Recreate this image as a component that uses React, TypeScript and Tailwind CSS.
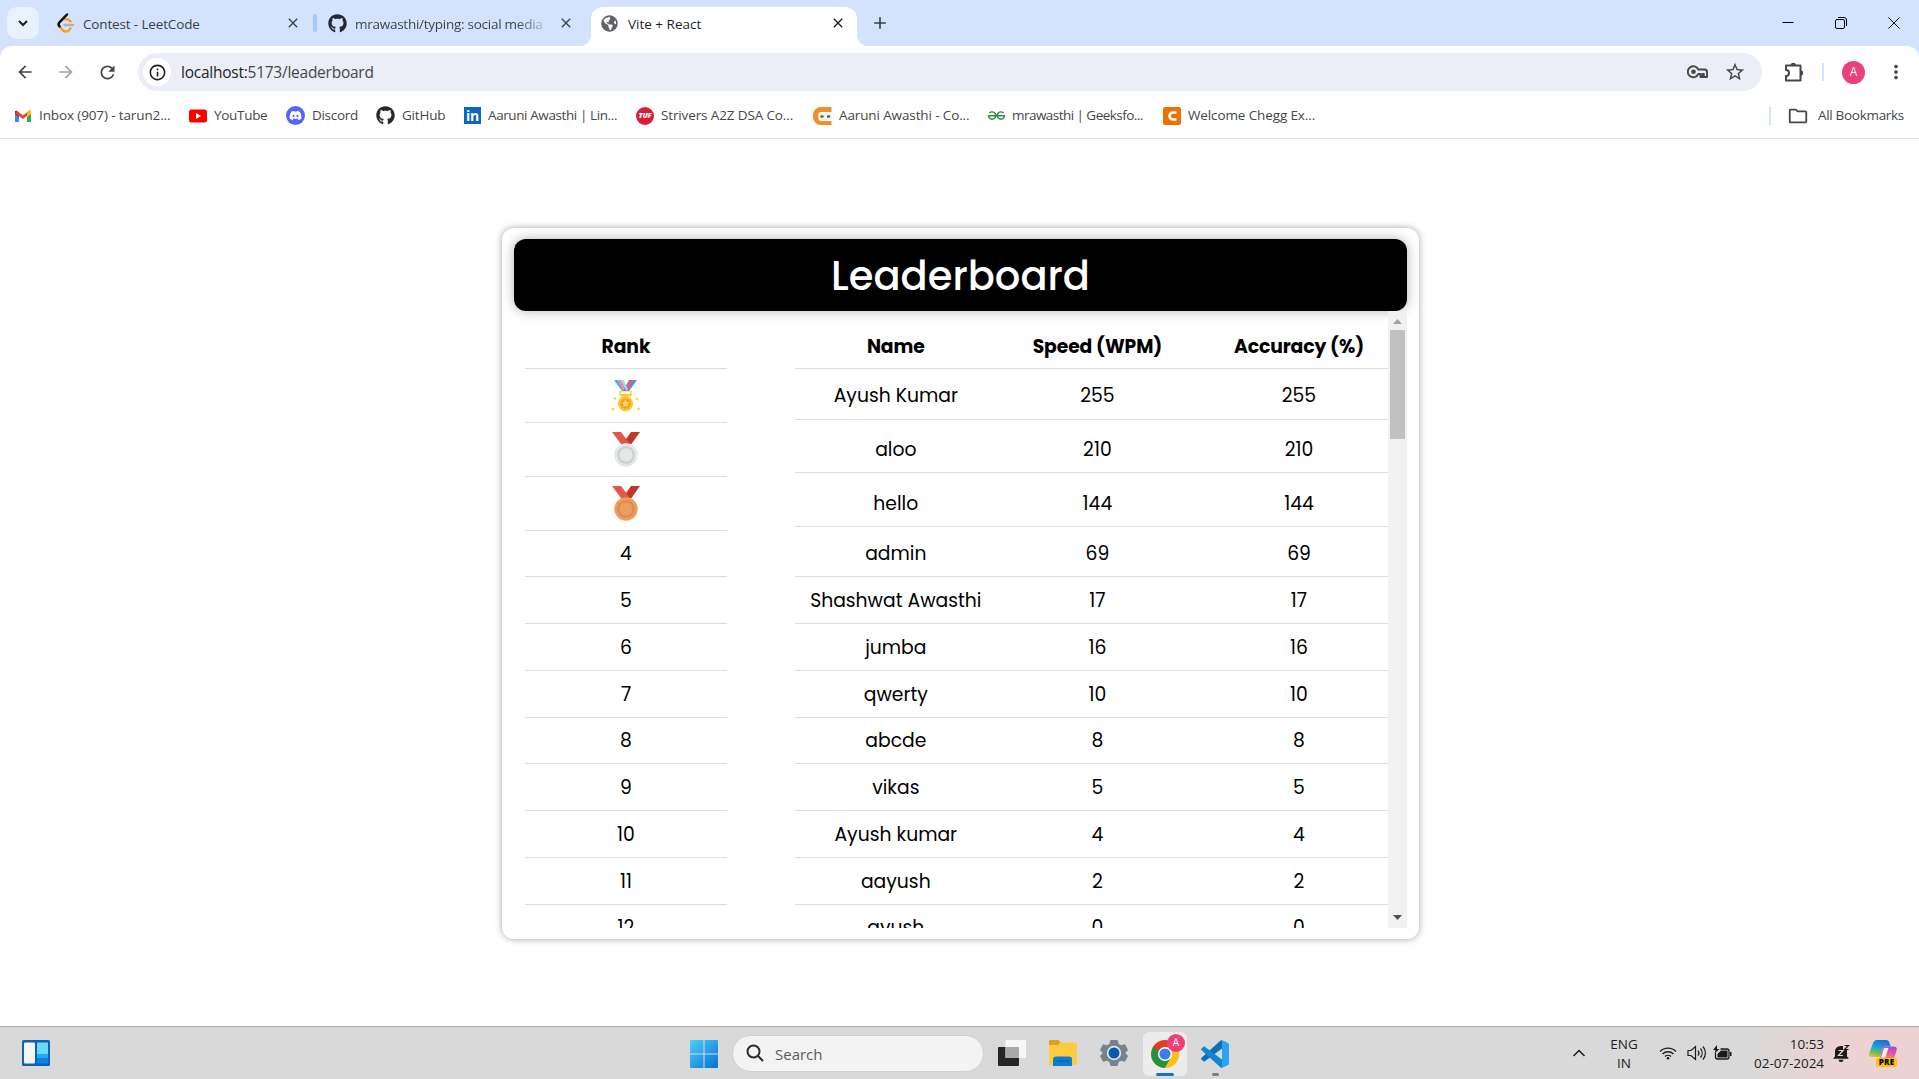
import React from "react";
import { FaGithub, FaDiscord, FaGlobeAmericas } from "react-icons/fa";
import {
  MdArrowBack,
  MdArrowForward,
  MdRefresh,
  MdInfoOutline,
  MdStarOutline,
  MdMoreVert,
  MdAdd,
  MdClose,
  MdOutlineFolder,
} from "react-icons/md";
import { SiGeeksforgeeks } from "react-icons/si";

const names: [string, number][] = [
  ["Ayush Kumar", 255],
  ["aloo", 210],
  ["hello", 144],
  ["admin", 69],
  ["Shashwat Awasthi", 17],
  ["jumba", 16],
  ["qwerty", 10],
  ["abcde", 8],
  ["vikas", 5],
  ["Ayush kumar", 4],
  ["aayush", 2],
  ["ayush", 0],
];

function GoldMedal() {
  return (
    <svg viewBox="0 0 30 34" className="h-[34px] w-[30px]">
      <path d="M3 1h8l6 11h-6z" fill="#2cb5f5" />
      <path d="M6 1h4l6 11h-4z" fill="#fa8a8c" />
      <path d="M26 1h-8l-6 11h6z" fill="#2f9af3" />
      <path d="M22.500 1h-4L13 12h4z" fill="#f0596a" />
      <path d="M9.500 1h3l4.500 9-1.500 2z" fill="#8fdcfb" />
      <path d="M8.500 12h12v5h-12z" fill="#ffc928" />
      <path d="M10 12.500h9v2.500h-9z" fill="#fff" />
      <circle cx="14.500" cy="24.500" r="7.700" fill="#ffc928" />
      <circle cx="14.500" cy="24.500" r="5.300" fill="#f79c2d" />
      <path d="m14.500 20.500 1.200 2.600 2.800.3-2.100 1.900.6 2.800-2.500-1.400-2.500 1.400.6-2.800-2.100-1.900 2.800-.3z" fill="#ffdd62" />
      <g fill="#ffc928">
        <circle cx="4" cy="19.500" r="1.200" />
        <circle cx="2" cy="30" r="1.300" />
        <circle cx="27.500" cy="30" r="1.200" />
        <path d="m26 18 .7 1.500 1.500.6-1.500.6-.7 1.500-.6-1.500-1.500-.6 1.500-.6z" />
      </g>
    </svg>
  );
}

function Medal({ outer, ring, inner }: { outer: string; ring: string; inner: string }) {
  return (
    <svg viewBox="0 0 30 36" className="-mt-[2px] h-9 w-[30px]">
      <path d="M29 1h-9l-8.500 12h9z" fill="#c0392b" />
      <path d="M1 1h9l9 12h-9z" fill="#e2574c" />
      <circle cx="15" cy="24" r="11.700" fill={outer} />
      <circle cx="15" cy="24" r="8.700" fill={ring} />
      <circle cx="15" cy="24" r="6.700" fill={inner} />
    </svg>
  );
}

function LeaderboardRow({ rank, name, score }: { rank: number; name: string; score: number }) {
  const podium = rank <= 3;
  return (
    <div className={podium ? "flex h-[53.900px] shrink-0" : "flex h-[46.750px] shrink-0"}>
      <div className="flex h-full w-[202px] shrink-0 items-center justify-center border-b border-[#dddddd] pt-[2px]">
        {rank === 1 && <GoldMedal />}
        {rank === 2 && <Medal outer="#e4e7e7" ring="#cbcdcd" inner="#e4e7e7" />}
        {rank === 3 && <Medal outer="#ed9d5d" ring="#d68d54" inner="#ed9d5d" />}
        {!podium && rank}
      </div>
      <div
        className={
          podium
            ? "ml-[68px] flex h-[50.500px] shrink-0 items-center border-b border-[#dddddd] pt-[5px]"
            : "ml-[68px] flex h-full shrink-0 items-center border-b border-[#dddddd] pt-[2px]"
        }
      >
        <span className="w-[201.600px] text-center whitespace-nowrap">{name}</span>
        <span className="w-[201.600px] text-center">{score}</span>
        <span className="w-[201.600px] text-center">{score}</span>
      </div>
    </div>
  );
}

function Leaderboard() {
  return (
    <section className="h-[711px] w-[917px] rounded-xl bg-white px-3 pt-[11px] shadow-[0_0_7px_rgba(0,0,0,0.36)]">
      <h1 className="flex h-[72px] items-center justify-center rounded-xl bg-black pt-px text-[40px] font-medium text-white shadow-[0_0_12px_rgba(0,0,0,0.3)]">
        Leaderboard
      </h1>
      <div className="flex h-[617px]">
        <div className="flex h-full w-[874px] flex-col overflow-hidden pl-[11px] text-[18.750px] text-black">
          <div className="flex h-[58px] shrink-0 font-bold tracking-[-0.100px]">
            <div className="w-[202px] shrink-0 border-b border-[#dddddd] pt-[22px] text-center leading-7">Rank</div>
            <div className="ml-[68px] flex shrink-0 border-b border-[#dddddd] pt-[22px] text-center leading-7">
              <span className="w-[201.600px]">Name</span>
              <span className="w-[201.600px]">Speed (WPM)</span>
              <span className="w-[201.600px]">Accuracy (%)</span>
            </div>
          </div>
          {names.map(([name, score], i) => (
            <LeaderboardRow key={name} rank={i + 1} name={name} score={score} />
          ))}
        </div>
        <div className="flex h-full w-[19px] flex-col items-center justify-between bg-[#f1f1f1]">
          <div className="flex flex-col items-center">
            <svg viewBox="0 0 19 19" className="h-[19px] w-[19px]">
              <path d="M5 13h9L9.500 8z" fill="#a3a3a3" />
            </svg>
            <div className="h-[109px] w-[15px] bg-[#c1c1c1]" />
          </div>
          <svg viewBox="0 0 19 19" className="h-[19px] w-[19px]">
            <path d="M5 6h9l-4.500 5z" fill="#505050" />
          </svg>
        </div>
      </div>
    </section>
  );
}

function LeetCodeIcon() {
  return (
    <svg viewBox="0 0 18 20" className="h-5 w-[18px]" fill="none" strokeWidth="2.500" strokeLinecap="round">
      <path d="m7.500 6 2.500.2c1 .2 2 .9 3.500 2.300M2.500 13.500l3.700 4c1.500 1.300 4 1.300 5.500-.2l1.800-1.900" stroke="#f7a11b" />
      <path d="M10 1.500 2.700 9.200a3 3 0 0 0-.2 4.200" stroke="#111" />
      <path d="M7.500 12h8.500" stroke="#b3b1b0" />
    </svg>
  );
}

function TabStrip() {
  return (
    <header className="flex h-[46px] bg-[#d3e3fd] text-[13.500px] text-[#3c4043]">
      <button className="mt-[7px] ml-[7px] flex h-8 w-8 items-center justify-center rounded-[10px] bg-[#e9f1fe]">
        <svg viewBox="0 0 12 12" className="h-3 w-3" fill="none" stroke="#1f1f1f" strokeWidth="2">
          <path d="m2 4 4 4 4-4" />
        </svg>
      </button>
      <div className="flex h-[46px] w-[274px] items-center pl-[18px]">
        <LeetCodeIcon />
        <span className="mt-[2px] ml-2 w-[202px] whitespace-nowrap tracking-[-0.150px]">Contest - LeetCode</span>
        <MdClose className="h-4 w-4" />
      </div>
      <div className="mt-[14px] h-[18px] w-1 rounded-sm bg-[#a8c7fa]" />
      <div className="flex h-[46px] w-[274px] items-center pl-[11px]">
        <FaGithub className="h-[19px] w-[19px] text-[#24292f]" />
        <span className="mt-[2px] ml-2 w-[190px] overflow-hidden bg-linear-to-r from-[#3c4043] from-85% to-[#3c404333] bg-clip-text tracking-[-0.260px] whitespace-nowrap text-transparent">
          mrawasthi/typing: social media
        </span>
        <MdClose className="ml-[13px] h-4 w-4" />
      </div>
      <div className="relative mt-[7px] flex h-[39px] w-[266px] items-center rounded-t-xl bg-white pb-[7px] pl-[9px] text-[#1f1f1f]">
        <span className="absolute bottom-0 -left-3 h-3 w-3 bg-[radial-gradient(circle_at_0_0,transparent_12px,white_12.500px)]" />
        <span className="absolute -right-3 bottom-0 h-3 w-3 bg-[radial-gradient(circle_at_100%_0,transparent_12px,white_12.500px)]" />
        <FaGlobeAmericas className="ml-px h-[17px] w-[17px] text-[#5f6368]" />
        <span className="mt-[2px] ml-[10px] w-[202px]">Vite + React</span>
        <MdClose className="h-4 w-4" />
      </div>
      <MdAdd className="mt-[13px] ml-[13px] h-5 w-5" />
      <div className="mr-[19px] ml-auto flex h-[45px] items-center gap-[41px] text-black">
        <svg viewBox="0 0 12 12" className="h-3 w-3" stroke="currentColor">
          <path d="M.5 5.500h11" />
        </svg>
        <svg viewBox="0 0 12 12" className="h-3 w-3" fill="none" stroke="currentColor">
          <rect x=".5" y="2.500" width="9" height="9" rx="1.500" />
          <path d="M3 .5h6a2.500 2.500 0 0 1 2.500 2.500v6" />
        </svg>
        <svg viewBox="0 0 12 12" className="h-3 w-3" stroke="currentColor">
          <path d="m.5.5 11 11M11.500.5l-11 11" />
        </svg>
      </div>
    </header>
  );
}

function KeyIcon() {
  return (
    <svg viewBox="0 0 22 16" className="h-4 w-[22px]" fill="none" stroke="currentColor" strokeWidth="1.900">
      <path d="M11.300 5.500A5.500 5.500 0 1 0 11.300 10h2.200v3h2v-3h1.300v3h3.200V8a2.500 2.500 0 0 0-2-2.500z" strokeLinejoin="round" />
      <circle cx="6.500" cy="7.800" r="2.300" fill="currentColor" stroke="none" />
    </svg>
  );
}

function ExtensionIcon() {
  return (
    <svg viewBox="0 0 20 22" className="h-[22px] w-5">
      <path
        d="M2 4.500h14.500v15H2V15a3 3 0 0 0 0-6z"
        fill="none"
        stroke="currentColor"
        strokeWidth="2"
        strokeLinejoin="round"
      />
      <path d="M6.500 4a2.800 2.800 0 0 1 5.500 0zM17 9.300a2.800 2.800 0 0 1 0 5.500z" fill="currentColor" />
    </svg>
  );
}

function Toolbar() {
  return (
    <div className="bg-[#d3e3fd]">
      <div className="flex h-[52px] items-center rounded-t-xl bg-white text-[#474747]">
        <MdArrowBack className="ml-[15px] h-5 w-5" />
        <MdArrowForward className="ml-[21px] h-5 w-5 text-[#a6a6a6]" />
        <MdRefresh className="ml-[21px] h-[21px] w-[21px]" />
        <div className="ml-5 flex h-[38px] w-[1624px] items-center rounded-full bg-[#ebeef7] pl-[5px]">
          <span className="flex h-7 w-7 items-center justify-center rounded-full bg-white text-[#1f1f1f]">
            <MdInfoOutline className="h-[19px] w-[19px]" />
          </span>
          <span className="mt-[2px] ml-[10px] text-[15.500px] tracking-[-0.250px] text-[#474747]">
            <span className="text-[#1f1f1f]">localhost:</span>5173/leaderboard
          </span>
          <span className="mr-4 ml-auto flex items-center gap-[15px]">
            <KeyIcon />
            <MdStarOutline className="h-[22px] w-[22px]" />
          </span>
        </div>
        <span className="ml-[22px]">
          <ExtensionIcon />
        </span>
        <div className="ml-[18px] h-[18px] w-[2px] bg-[#d3e3fd]" />
        <span className="ml-[18px] flex h-[23px] w-[23px] items-center justify-center rounded-full bg-[#ec407a] text-[12px] text-white">
          A
        </span>
        <MdMoreVert className="ml-[20px] h-[22px] w-[22px]" />
      </div>
    </div>
  );
}

const bookmarks: { label: string; width: string; tracking: string; icon: React.ReactNode }[] = [
  {
    label: "Inbox (907) - tarun2...",
    width: "w-[175px]",
    tracking: "tracking-[-0.120px]",
    icon: (
      <svg viewBox="0 0 18 18" className="h-[18px] w-[18px]">
        <path d="M1 4v11h4V8z" fill="#4285f4" />
        <path d="M13 8v7h4V4z" fill="#34a853" />
        <path d="M1 4v3l4 3V6L3 4z" fill="#c5221f" />
        <path d="M17 4v3l-4 3V6l2-2z" fill="#fbbc04" />
        <path d="M2 3 9 8.500 16 3v3.500l-7 5.500-7-5.500z" fill="#ea4335" />
        <path d="M13 6v4l4-3V4.500C17 3 15.500 2.500 14.500 4z" fill="#fbbc04" />
      </svg>
    ),
  },
  {
    label: "YouTube",
    width: "w-[97px]",
    tracking: "tracking-[-0.300px]",
    icon: (
      <svg viewBox="0 0 18 18" className="h-[18px] w-[18px]">
        <rect y="2.500" width="18" height="13" rx="2.500" fill="#f00" />
        <path d="M7 6v6l5-3z" fill="#fff" />
      </svg>
    ),
  },
  {
    label: "Discord",
    width: "w-[90px]",
    tracking: "tracking-[-0.300px]",
    icon: (
      <span className="flex h-[19px] w-[19px] items-center justify-center rounded-full bg-[#5865f2]">
        <FaDiscord className="h-[13px] w-[13px] text-white" />
      </span>
    ),
  },
  {
    label: "GitHub",
    width: "w-[88px]",
    tracking: "tracking-[-0.200px]",
    icon: <FaGithub className="h-[19px] w-[19px] text-[#24292f]" />,
  },
  {
    label: "Aaruni Awasthi | Lin...",
    width: "w-[172px]",
    tracking: "tracking-[-0.400px]",
    icon: (
      <span className="flex h-[17px] w-[17px] items-center justify-center bg-[#0a66c2] font-['Open_Sans'] text-[14px] leading-none font-bold tracking-tight text-white">
        in
      </span>
    ),
  },
  {
    label: "Strivers A2Z DSA Co...",
    width: "w-[177px]",
    tracking: "tracking-[-0.130px]",
    icon: (
      <span className="flex h-[18px] w-[18px] items-center justify-center rounded-full bg-[#d81e34] text-[7.500px] font-extrabold tracking-tight text-white italic">
        TUF
      </span>
    ),
  },
  {
    label: "Aaruni Awasthi - Co...",
    width: "w-[175px]",
    tracking: "tracking-[-0.120px]",
    icon: (
      <svg viewBox="0 0 19 18" className="h-[18px] w-[19px]">
        <path d="M18.500 0H8a8 8 0 0 0-8 8v2a8 8 0 0 0 8 8h10.500v-4H8.500a3 3 0 0 1-3-3V8a3 3 0 0 1 3-3h10z" fill="#f0902a" />
        <rect x="5.500" y="6" width="13.500" height="7" rx="2" fill="#f1f1f1" />
        <path d="M7.500 8.500h3v2h-3zM14 8.500h3v2h-3z" fill="#444" />
      </svg>
    ),
  },
  {
    label: "mrawasthi | Geeksfo...",
    width: "w-[175px]",
    tracking: "tracking-[-0.540px]",
    icon: <SiGeeksforgeeks className="h-[17px] w-[17px] text-[#2f8d46]" />,
  },
  {
    label: "Welcome Chegg Ex...",
    width: "w-[170px]",
    tracking: "tracking-[-0.120px]",
    icon: (
      <svg viewBox="0 0 18 18" className="h-[18px] w-[18px]">
        <rect width="18" height="18" rx="2.500" fill="#eb7100" />
        <path d="M13.500 5.500H10a3.500 3.500 0 0 0 0 7h3.500" fill="none" stroke="#fff" strokeWidth="2.600" />
      </svg>
    ),
  },
];

function BookmarksBar() {
  return (
    <div className="flex h-[41px] items-center border-b border-[#dfe1e5] bg-white pb-[5px] pl-[14px] text-[13.500px] text-[#474747]">
      {bookmarks.map((b) => (
        <div key={b.label} className={`flex shrink-0 items-center gap-[7px] whitespace-nowrap ${b.width} ${b.tracking}`}>
          {b.icon}
          <span>{b.label}</span>
        </div>
      ))}
      <div className="ml-auto h-[18px] w-[2px] bg-[#d3e3fd]" />
      <MdOutlineFolder className="ml-[16px] h-[22px] w-[22px]" />
      <span className="mr-[15px] ml-[9px] tracking-[-0.300px]">All Bookmarks</span>
    </div>
  );
}

function ChromeLogo() {
  return (
    <svg viewBox="0 0 28 28" className="h-7 w-7">
      <circle cx="14" cy="14" r="14" fill="#fbc116" />
      <path d="M1.900 7A14 14 0 0 0 14 28l6-10.500-6-3.500V7z" fill="#229342" />
      <path d="M1.900 7A14 14 0 0 1 26.100 7H14a7 7 0 0 0-6.300 4L8 17.500z" fill="#e33b2e" />
      <path d="M1.900 7 8 17.500 14 14 7 10z" fill="#229342" />
      <path d="M14 28a14 14 0 0 0 12.100-21H14l6 10.500z" fill="#fbc116" />
      <circle cx="14" cy="14" r="7" fill="#fff" />
      <circle cx="14" cy="14" r="5.600" fill="#3c7ded" />
    </svg>
  );
}

function Taskbar() {
  return (
    <footer className="flex h-[53px] items-center border-t border-[#ababab] bg-linear-to-r from-[#d9d9d9] from-91% to-[#ecd2d3] to-96% text-[#1b1b1b]">
      <svg viewBox="0 0 28 26" className="ml-[22px] h-[26px] w-7">
        <rect width="28" height="26" rx="1.500" fill="#0c62b8" />
        <rect x="2" y="2.500" width="11" height="21" rx="1" fill="#f5f5f5" />
        <path d="M15 2.500h11V14H15z" fill="#69dbff" />
        <path d="M15 14h11v4.500H15z" fill="#1fa6f8" />
        <path d="M15 18.500h11v5H15z" fill="#0683ea" />
      </svg>
      <svg viewBox="0 0 28 28" className="mt-px ml-[640px] h-7 w-7">
        <defs>
          <linearGradient id="win" x1="0" y1="0" x2="1" y2="1">
            <stop offset="0" stopColor="#4fd0fb" />
            <stop offset="1" stopColor="#0571cf" />
          </linearGradient>
        </defs>
        <path
          d="M1 0h12.500v13.500H0V1a1 1 0 0 1 1-1zM14.500 0H27a1 1 0 0 1 1 1v12.500H14.500zM0 14.500h13.500V28H1a1 1 0 0 1-1-1zM14.500 14.500H28V27a1 1 0 0 1-1 1H14.500z"
          fill="url(#win)"
        />
      </svg>
      <div className="ml-[14px] flex h-[37px] w-[252px] items-center rounded-full border border-[#cfcfcf] bg-[#f3f3f3] pl-[13px]">
        <svg viewBox="0 0 18 18" className="h-[18px] w-[18px]" fill="none" stroke="#2a2a2a" strokeWidth="2">
          <circle cx="7.500" cy="7.500" r="6" />
          <path d="m12 12 5 5" />
        </svg>
        <span className="mt-[2px] ml-[11px] text-[15px] text-[#5c5c5c]">Search</span>
      </div>
      <svg viewBox="0 0 28 26" className="ml-[14px] h-[26px] w-7">
        <rect y="7" width="21" height="19" rx="1" fill="#262626" />
        <rect x="7.500" width="20.500" height="18" rx="1" fill="#f8f8f8" />
        <path d="M7.500 7H21v11H7.500z" fill="#a9a9a9" />
      </svg>
      <svg viewBox="0 0 28 26" className="ml-[23px] h-[26px] w-7">
        <path d="M0 1.500A1.500 1.500 0 0 1 1.500 0h8L12 3v3H0z" fill="#e0a018" />
        <path d="M0 5h9l2-2.500h15.500A1.500 1.500 0 0 1 28 4v19.500a1.500 1.500 0 0 1-1.500 1.500H0z" fill="#fdcb42" />
        <path d="M4 26v-6.500A3 3 0 0 1 7 16.500h13a3 3 0 0 1 3 3V26z" fill="#107cd0" />
        <path d="M8 21h12" stroke="#075ba8" />
      </svg>
      <svg viewBox="0 0 28 28" className="ml-[23px] h-7 w-7">
        <path
          d="M10.500 1h7l1.200 4 2.300 1.300 4-1.100L28 11l-2.800 3L28 17l-3 5.800-4-1.100-2.300 1.300-1.200 4h-7l-1.200-4L7 21.700l-4 1.100L0 17l2.800-3L0 11l3-5.800 4 1.100L9.300 5z"
          fill="#76838f"
        />
        <circle cx="14" cy="14" r="7.200" fill="#e4e8ec" />
        <circle cx="14" cy="14" r="5.500" fill="#0c5aad" />
      </svg>
      <div className="relative mt-px ml-[15px] flex h-[44px] w-[44px] items-center justify-center rounded-md bg-[#ececec]">
        <ChromeLogo />
        <span className="absolute top-[2px] right-[2px] flex h-[18px] w-[18px] items-center justify-center rounded-full bg-[#ec407a] text-[10px] text-white">
          A
        </span>
        <span className="absolute bottom-0 h-[3px] w-[18px] rounded-full bg-[#0a78d4]" />
      </div>
      <div className="relative mt-px ml-[14px] flex h-[44px] w-[28px] items-center justify-center">
        <svg viewBox="0 0 28 28" className="h-7 w-7" strokeLinejoin="round">
          <path d="M21 0v8.500L3.800 21.300c-.4.300-1 .3-1.400-.1L.6 19.600c-.6-.5-.6-1.300 0-1.800L19.300.8z" fill="#0a70b8" />
          <path d="M21 28v-8.500L3.800 6.700c-.4-.3-1-.3-1.400.1L.6 8.400c-.6.5-.6 1.300 0 1.800l18.700 17z" fill="#0f88d0" />
          <path d="M19.300.7c.6-.7 1.300-.8 2-.5L27 3c.6.300 1 .9 1 1.600v18.800c0 .7-.4 1.300-1 1.600l-5.700 2.800c-.7.300-1.400.2-2-.5.900.4 1.700 0 1.700-1V1.700c0-1-.8-1.400-1.700-1z" fill="#2aa4f0" />
        </svg>
        <span className="absolute bottom-0 h-[3px] w-[7px] rounded-full bg-[#7c7c7c]" />
      </div>
      <svg viewBox="0 0 14 8" className="ml-auto h-2 w-[14px]" fill="none" stroke="currentColor" strokeWidth="1.500">
        <path d="m1.500 7 5.500-5.500L12.500 7" />
      </svg>
      <div className="mt-[2px] ml-[18px] flex w-[40px] flex-col items-center text-[13.500px] leading-[19px]">
        <span>ENG</span>
        <span>IN</span>
      </div>
      <svg viewBox="0 0 18 14" className="ml-[15px] h-[14px] w-[18px]" fill="none" stroke="currentColor" strokeWidth="1.300">
        <path d="M1 5.500a11.300 11.300 0 0 1 16 0M3.500 8a7.800 7.800 0 0 1 11 0M6 10.500a4.300 4.300 0 0 1 6 0" />
        <circle cx="9" cy="12.200" r="1.300" fill="currentColor" stroke="none" />
      </svg>
      <svg viewBox="0 0 20 16" className="ml-[10px] h-4 w-5" fill="none" stroke="currentColor" strokeWidth="1.200">
        <path d="M1 5.500h3L8.500 1.500v13L4 10.500H1zM11 5.500a4 4 0 0 1 0 5M13.500 3.500a7 7 0 0 1 0 9M16 1.500a10 10 0 0 1 0 13" />
      </svg>
      <svg viewBox="0 0 20 16" className="ml-[6px] h-4 w-5">
        <path d="M2.500 8v4a2 2 0 0 0 2 2H14a2 2 0 0 0 2-2V6a2 2 0 0 0-2-2H7.500" fill="none" stroke="currentColor" strokeWidth="1.300" />
        <path d="M4.500 9 8 5.500h6.500v7h-10zM17 7h1.500v4H17zM4 0 0 5h2.500L1.500 8.500 6.500 4H4z" fill="currentColor" />
      </svg>
      <div className="mt-[2px] ml-[17px] flex w-[74px] flex-col items-end text-[13.500px] leading-[19px] tracking-[-0.050px] whitespace-nowrap">
        <span>10:53</span>
        <span>02-07-2024</span>
      </div>
      <svg viewBox="0 0 18 18" className="ml-2 h-[18px] w-[18px]">
        <path d="M3 12.500V7.500A5.500 5.500 0 0 1 8.500 2H11v4h4v6.500l1.500 1.500v.8h-15V14z" fill="currentColor" />
        <path d="M6.500 15.800h5a2.500 2.200 0 0 1-5 0z" fill="currentColor" />
        <path d="M6.500 6.500h4.500l-4.500 5h4.500" fill="none" stroke="#ecd2d3" strokeWidth="1.200" />
        <path d="M12.500 1.500h4l-4 4h4" fill="none" stroke="currentColor" strokeWidth="1.200" />
      </svg>
      <div className="relative mr-[22px] ml-[19px] h-[27px] w-7">
        <svg viewBox="0 0 28 27" className="h-[27px] w-7">
          <defs>
            <linearGradient id="cpA" x1="0.500" y1="0" x2="0.200" y2="1">
              <stop offset="0" stopColor="#1a6fd8" />
              <stop offset="0.450" stopColor="#22a5d5" />
              <stop offset="0.750" stopColor="#6cc04a" />
              <stop offset="1" stopColor="#f2c11c" />
            </linearGradient>
            <linearGradient id="cpB" x1="0.700" y1="0" x2="0.400" y2="1">
              <stop offset="0" stopColor="#a24be0" />
              <stop offset="0.500" stopColor="#e75a9c" />
              <stop offset="1" stopColor="#fb9b4b" />
            </linearGradient>
          </defs>
          <path d="M8 0h9c2 0 3 1 3.500 3l1 3.500h-5c-2 0-3 1-3.500 3L11 17H2.500C.5 17-.5 15.500.2 13.500L4 3C4.800 1 6 0 8 0z" fill="url(#cpA)" />
          <path d="M19 6.500h6c2 0 3.300 1.500 2.700 3.500L24.500 20H10l3-10.500c.6-2 1.500-3 3.500-3z" fill="url(#cpB)" />
          <path d="M15 8h4.500l-3.300 9.500h-4z" fill="#fbeff5" />
        </svg>
        <span className="absolute bottom-0 left-[7px] flex h-[9px] w-[21px] items-center justify-center rounded-[2px] bg-[#ffc400] text-[8px] leading-none font-extrabold tracking-wide text-black">
          PRE
        </span>
      </div>
    </footer>
  );
}

export default function App() {
  return (
    <div className="flex h-[1079px] w-[1919px] flex-col overflow-hidden bg-white font-['Segoe_UI','Open_Sans',sans-serif]">
      <TabStrip />
      <Toolbar />
      <BookmarksBar />
      <main className="flex flex-1 justify-center pt-[89px] pl-[2px] font-['Poppins','Inter',sans-serif]">
        <Leaderboard />
      </main>
      <Taskbar />
    </div>
  );
}
